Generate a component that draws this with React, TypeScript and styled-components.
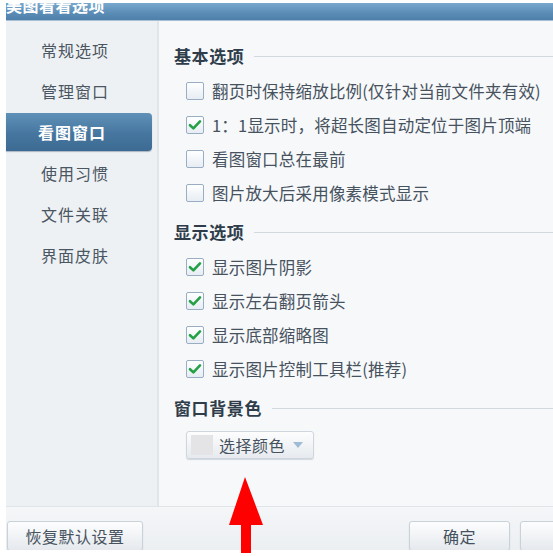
import React from 'react';
import styled, { createGlobalStyle } from 'styled-components';

const GlobalStyle = createGlobalStyle`
  html, body {
    margin: 0;
    padding: 0;
    background: #ffffff;
  }
  body {
    font-family: "Noto Sans CJK SC", "Noto Sans", sans-serif;
    color: #44505c;
    overflow: hidden;
  }
`;

const Page = styled.div`
  position: relative;
  width: 553px;
  height: 556px;
  overflow: hidden;
  background: #ffffff;
`;

const Window = styled.div`
  margin: 3px 0 0 6px;
  width: 547px;
  height: 547px;
  display: flex;
  flex-direction: column;
  background: #f6f7f9;
`;

const TitleBar = styled.div`
  height: 17px;
  flex-shrink: 0;
  overflow: hidden;
  background: linear-gradient(#78a8cd, #5a8cb6 60%, #4f80ab);
  border-bottom: 1px solid #a8bfd3;
`;

const TitleText = styled.div`
  margin-top: -9px;
  font-size: 16px;
  line-height: 22px;
  font-weight: 700;
  color: #ffffff;
  letter-spacing: 0.5px;
`;

const Body = styled.div`
  flex: 1;
  display: flex;
  min-height: 0;
`;

const Sidebar = styled.div`
  width: 151px;
  flex-shrink: 0;
  padding-top: 10px;
  background: #eef1f4;
  border-right: 2px solid #e0e5ea;
  display: flex;
  flex-direction: column;
  gap: 3px;
`;

const NavItem = styled.div<{ $active?: boolean }>`
  height: 38px;
  margin-right: 5px;
  display: flex;
  align-items: center;
  padding-left: ${(p) => (p.$active ? 32 : 35)}px;
  font-size: 16px;
  letter-spacing: 1px;
  border-radius: 0 4px 4px 0;
  color: ${(p) => (p.$active ? '#ffffff' : '#4a5662')};
  font-weight: ${(p) => (p.$active ? 700 : 400)};
  background: ${(p) => (p.$active ? 'linear-gradient(#5f91b8, #46769f 55%, #3c6a93)' : 'transparent')};
  box-shadow: ${(p) => (p.$active ? '0 1px 1px rgba(40,70,100,0.35)' : 'none')};
`;

const Main = styled.div`
  flex: 1;
  padding: 23px 0 0 15px;
  background: #f7f8fa;
`;

const Section = styled.div`
  display: flex;
  flex-direction: column;
`;

const SectionHead = styled.div`
  display: flex;
  align-items: center;
  gap: 10px;
  height: 22px;
  font-size: 17px;
  font-weight: 700;
  letter-spacing: 0.6px;
  color: #2f3d4a;
  &::after {
    content: '';
    flex: 1;
    height: 1px;
    background: #d3d9df;
    margin-top: 2px;
  }
`;

const Options = styled.div`
  display: flex;
  flex-direction: column;
  padding: 8px 0 10px 12px;
`;

const Row = styled.div`
  height: 34px;
  display: flex;
  align-items: center;
  gap: 8px;
  font-size: 16.5px;
  letter-spacing: 0.2px;
  color: #46525e;
  white-space: nowrap;
`;

const Box = styled.span`
  width: 16px;
  height: 16px;
  flex-shrink: 0;
  display: flex;
  align-items: center;
  justify-content: center;
  border: 1px solid #9aaec3;
  border-radius: 2px;
  background: linear-gradient(#ffffff, #e7edf3);
`;

const ColorButton = styled.div`
  margin: 13px 0 0 12px;
  width: 128px;
  height: 28px;
  display: flex;
  align-items: center;
  gap: 6px;
  padding-left: 4px;
  box-sizing: border-box;
  border: 1px solid #cfd6dd;
  border-radius: 3px;
  background: linear-gradient(#fdfdfe, #e6eaee);
  box-shadow: 0 1px 1px rgba(120, 140, 160, 0.3);
  font-size: 16px;
  letter-spacing: 0.5px;
  color: #46525e;
`;

const Swatch = styled.span`
  width: 22px;
  height: 20px;
  background: #e4e4e6;
`;

const Caret = styled.span`
  width: 0;
  height: 0;
  margin-left: 2px;
  border-left: 5px solid transparent;
  border-right: 5px solid transparent;
  border-top: 6px solid #9fbcd6;
`;

const Footer = styled.div`
  height: 44px;
  flex-shrink: 0;
  box-sizing: border-box;
  border-top: 1px solid #dfe4e8;
  background: linear-gradient(#f4f6f8, #eceff2);
  padding-top: 14px;
  display: flex;
  align-items: flex-start;
  overflow: hidden;
`;

const Button = styled.div<{ $width: number }>`
  width: ${(p) => p.$width}px;
  flex-shrink: 0;
  height: 30px;
  box-sizing: border-box;
  display: flex;
  align-items: center;
  justify-content: center;
  border: 1px solid #c9d1d9;
  border-radius: 3px;
  background: linear-gradient(#fdfdfe, #e5e9ed);
  box-shadow: 0 1px 1px rgba(120, 140, 160, 0.35);
  font-size: 16px;
  letter-spacing: 0.5px;
  color: #46525e;
`;

const Spacer = styled.div<{ $width: number }>`
  width: ${(p) => p.$width}px;
  flex-shrink: 0;
`;

const Arrow = styled.svg`
  position: absolute;
  left: 228px;
  top: 477px;
`;

const Check = () => (
  <svg width="14" height="12" viewBox="0 0 14 12">
    <path d="M2 6.2 L5.4 9.4 L12 2.4" fill="none" stroke="#25a145" strokeWidth="2.6" strokeLinecap="round" strokeLinejoin="round" />
  </svg>
);

const Option: React.FC<{ label: string; checked?: boolean }> = ({ label, checked }) => (
  <Row>
    <Box>{checked && <Check />}</Box>
    {label}
  </Row>
);

const nav = ['常规选项', '管理窗口', '看图窗口', '使用习惯', '文件关联', '界面皮肤'];

const basic = [
  { label: '翻页时保持缩放比例(仅针对当前文件夹有效)', checked: false },
  { label: '1：1显示时，将超长图自动定位于图片顶端', checked: true },
  { label: '看图窗口总在最前', checked: false },
  { label: '图片放大后采用像素模式显示', checked: false },
];

const display = [
  { label: '显示图片阴影', checked: true },
  { label: '显示左右翻页箭头', checked: true },
  { label: '显示底部缩略图', checked: true },
  { label: '显示图片控制工具栏(推荐)', checked: true },
];

const App: React.FC = () => (
  <Page>
    <GlobalStyle />
    <Window>
      <TitleBar>
        <TitleText>美图看看选项</TitleText>
      </TitleBar>
      <Body>
        <Sidebar>
          {nav.map((item) => (
            <NavItem key={item} $active={item === '看图窗口'}>
              {item}
            </NavItem>
          ))}
        </Sidebar>
        <Main>
          <Section>
            <SectionHead>基本选项</SectionHead>
            <Options>
              {basic.map((o) => (
                <Option key={o.label} label={o.label} checked={o.checked} />
              ))}
            </Options>
          </Section>
          <Section>
            <SectionHead>显示选项</SectionHead>
            <Options>
              {display.map((o) => (
                <Option key={o.label} label={o.label} checked={o.checked} />
              ))}
            </Options>
          </Section>
          <Section>
            <SectionHead>窗口背景色</SectionHead>
            <ColorButton>
              <Swatch />
              选择颜色
              <Caret />
            </ColorButton>
          </Section>
        </Main>
      </Body>
      <Footer>
        <Spacer $width={1} />
        <Button $width={136}>恢复默认设置</Button>
        <Spacer $width={266} />
        <Button $width={101}>确定</Button>
        <Spacer $width={10} />
        <Button $width={100} />
      </Footer>
    </Window>
    <Arrow width="36" height="80" viewBox="0 0 36 80">
      <polygon points="17,0 35,48 23,48 23,76 13,76 13,48 1,48" fill="#ff0000" />
    </Arrow>
  </Page>
);

export default App;
